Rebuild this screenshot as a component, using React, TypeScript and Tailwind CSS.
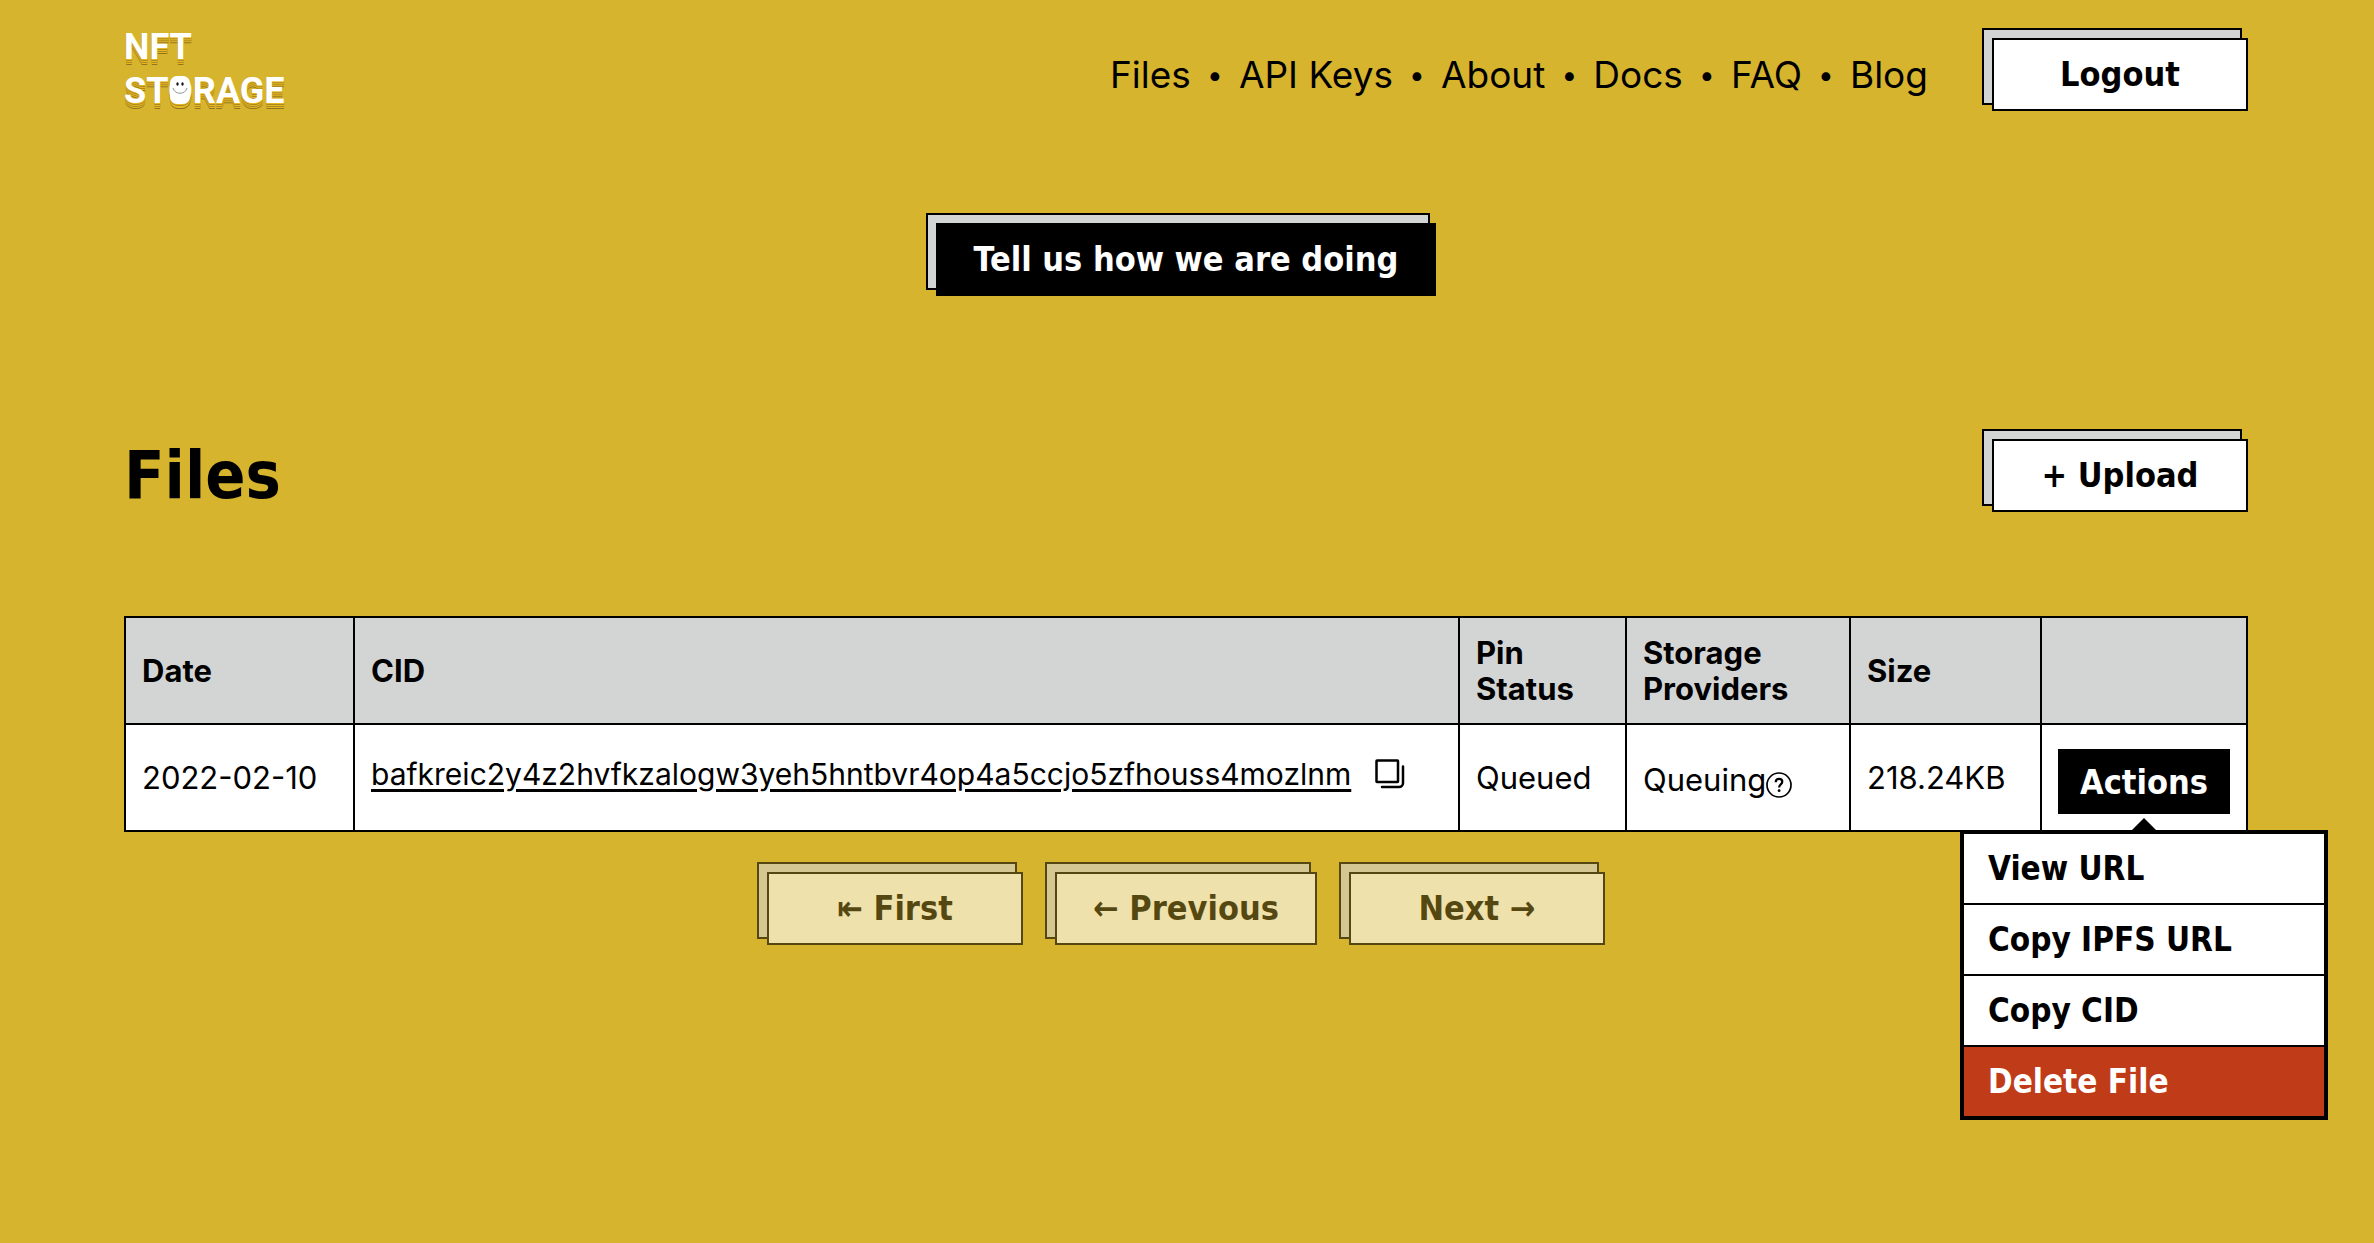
import type { ReactNode } from 'react'

const display = "font-['DejaVu_Sans_Condensed',sans-serif] font-bold"

function OffsetButton({
  children,
  dark = false,
  disabled = false,
}: {
  children: ReactNode
  dark?: boolean
  disabled?: boolean
}) {
  return (
    <div className={`isolate flex shrink-0 ${disabled ? 'opacity-60' : ''}`}>
      <button
        type="button"
        disabled={disabled}
        className={`relative h-[73px] min-w-64 border-2 border-black px-9 text-[34px] whitespace-nowrap before:absolute before:-top-3 before:right-1 before:bottom-1 before:-left-3 before:-z-10 before:border-2 before:border-black before:bg-[#d3d5d4] ${display} ${dark ? 'bg-black text-white' : 'bg-white text-black'}`}
      >
        {children}
      </button>
    </div>
  )
}

function Logo() {
  return (
    <a
      href="#home"
      className="-mt-3 font-['Roboto',sans-serif] text-[36px] leading-11 font-bold text-white [text-shadow:0_1px_#e9b820,0_2px_#a98a22,0_3px_#e9b820,0_4px_#a98a22,0_5px_#e9b820,0_6px_#8f7420]"
    >
      <span className="block">NFT</span>
      <span className="block">
        ST
        <span className="relative">
          O
          <svg
            viewBox="0 0 24 36"
            className="absolute top-1/2 left-1/2 h-9 w-6 -translate-x-1/2 -translate-y-1/2"
            aria-hidden="true"
          >
            <rect x="2" y="9" width="20" height="27" rx="8" fill="#8f7420" />
            <rect x="2" y="8" width="20" height="27" rx="8" fill="#e9b820" />
            <rect x="2" y="6" width="20" height="27" rx="8" fill="#a98a22" />
            <rect x="2" y="5" width="20" height="27" rx="8" fill="#e9b820" />
            <rect x="2" y="3" width="20" height="28" rx="7" fill="#fff" />
            <ellipse cx="9.500" cy="11" rx="1.200" ry="1.800" fill="#111" />
            <ellipse cx="14.500" cy="11" rx="1.200" ry="1.800" fill="#111" />
            <path d="M5 15c1.500 7 12.500 7 14 0" fill="none" stroke="#888" strokeWidth="0.900" />
          </svg>
        </span>
        RAGE
      </span>
    </a>
  )
}

function CopyIcon() {
  return (
    <svg viewBox="0 0 30 30" className="size-[30px]" fill="none" stroke="#000" strokeWidth="2.5" aria-hidden="true">
      <rect x="1.500" y="1.500" width="21.500" height="21.500" rx="0.500" />
      <path d="M28 7.500V24a4 4 0 0 1-4 4H7" strokeLinecap="round" />
    </svg>
  )
}

function HelpIcon() {
  return (
    <svg viewBox="0 0 26 26" className="size-[26px]" fill="none" stroke="#000" aria-hidden="true">
      <circle cx="13" cy="13" r="12" strokeWidth="1.700" />
      <path d="M9.700 10.200c0-2.100 1.400-3.400 3.300-3.400s3.300 1.200 3.300 3c0 2.600-3.200 2.700-3.200 5.600" strokeWidth="2.200" />
      <circle cx="13.100" cy="18.700" r="1.400" fill="#000" stroke="none" />
    </svg>
  )
}

const links = ['Files', 'API Keys', 'About', 'Docs', 'FAQ', 'Blog']
const menu = ['View URL', 'Copy IPFS URL', 'Copy CID', 'Delete File']
const cell = 'border-2 border-black px-4 text-left'

export default function App() {
  return (
    <div className="min-h-screen bg-[#d6b42e] pr-[126px] pl-31 font-['Inter',sans-serif] text-black">
      <header className="flex h-[149px] items-center justify-between">
        <Logo />
        <div className="flex items-center gap-16">
          <nav>
            <ul className="flex items-center text-[37px]">
              {links.map((label, i) => (
                <li key={label} className="flex items-center">
                  {i > 0 && <span className="w-12 text-center text-[28px]">•</span>}
                  <a href="#nav">{label}</a>
                </li>
              ))}
            </ul>
          </nav>
          <OffsetButton>Logout</OffsetButton>
        </div>
      </header>

      <main>
        <div className="flex justify-center pt-[74px]">
          <OffsetButton dark>Tell us how we are doing</OffsetButton>
        </div>

        <div className="mt-[143px] flex items-center justify-between">
          <h1 className={`text-[66px] leading-[70px] ${display}`}>Files</h1>
          <OffsetButton>+ Upload</OffsetButton>
        </div>

        <table className="mt-26 w-full table-fixed border-collapse text-[31px] leading-9">
          <colgroup>
            <col className="w-[229px]" />
            <col />
            <col className="w-[167px]" />
            <col className="w-[224px]" />
            <col className="w-[191px]" />
            <col className="w-[206px]" />
          </colgroup>
          <thead>
            <tr className="h-[107px] bg-[#d3d5d4]">
              <th className={cell}>Date</th>
              <th className={cell}>CID</th>
              <th className={cell}>Pin Status</th>
              <th className={cell}>Storage Providers</th>
              <th className={cell}>Size</th>
              <th className={cell} aria-label="Actions" />
            </tr>
          </thead>
          <tbody>
            <tr className="h-[107px] bg-white">
              <td className={`${cell} whitespace-nowrap`}>2022-02-10</td>
              <td className={cell}>
                <div className="flex items-center gap-6 pb-2">
                  <a href="#gateway" className="text-[30px] underline decoration-[3px] underline-offset-4">
                    bafkreic2y4z2hvfkzalogw3yeh5hntbvr4op4a5ccjo5zfhouss4mozlnm
                  </a>
                  <button type="button" aria-label="Copy CID">
                    <CopyIcon />
                  </button>
                </div>
              </td>
              <td className={cell}>Queued</td>
              <td className={cell}>
                <div className="flex items-end pt-1">
                  Queuing
                  <HelpIcon />
                </div>
              </td>
              <td className={cell}>218.24KB</td>
              <td className={cell}>
                <div className="relative mt-2">
                  <button type="button" className={`h-[65px] w-full bg-black text-[34px] text-white ${display}`}>
                    Actions
                  </button>
                  <div className="absolute top-full left-1/2 z-10 w-[368px] -translate-x-1/2 pt-1">
                    <svg viewBox="0 0 24 12" className="mx-auto h-3 w-6" aria-hidden="true">
                      <path d="M0 12 12 0l12 12z" />
                    </svg>
                    <ul className="divide-y-2 divide-black border-4 border-black bg-white">
                      {menu.map((label) => (
                        <li key={label}>
                          <button
                            type="button"
                            className={`h-[69px] w-full px-6 text-left text-[33px] ${display} ${label === 'Delete File' ? 'bg-[#c03c18] text-white' : ''}`}
                          >
                            {label}
                          </button>
                        </li>
                      ))}
                    </ul>
                  </div>
                </div>
              </td>
            </tr>
          </tbody>
        </table>

        <div className="mt-10 flex justify-center gap-8">
          <OffsetButton disabled>⇤ First</OffsetButton>
          <OffsetButton disabled>← Previous</OffsetButton>
          <OffsetButton disabled>Next →</OffsetButton>
        </div>
      </main>
    </div>
  )
}
